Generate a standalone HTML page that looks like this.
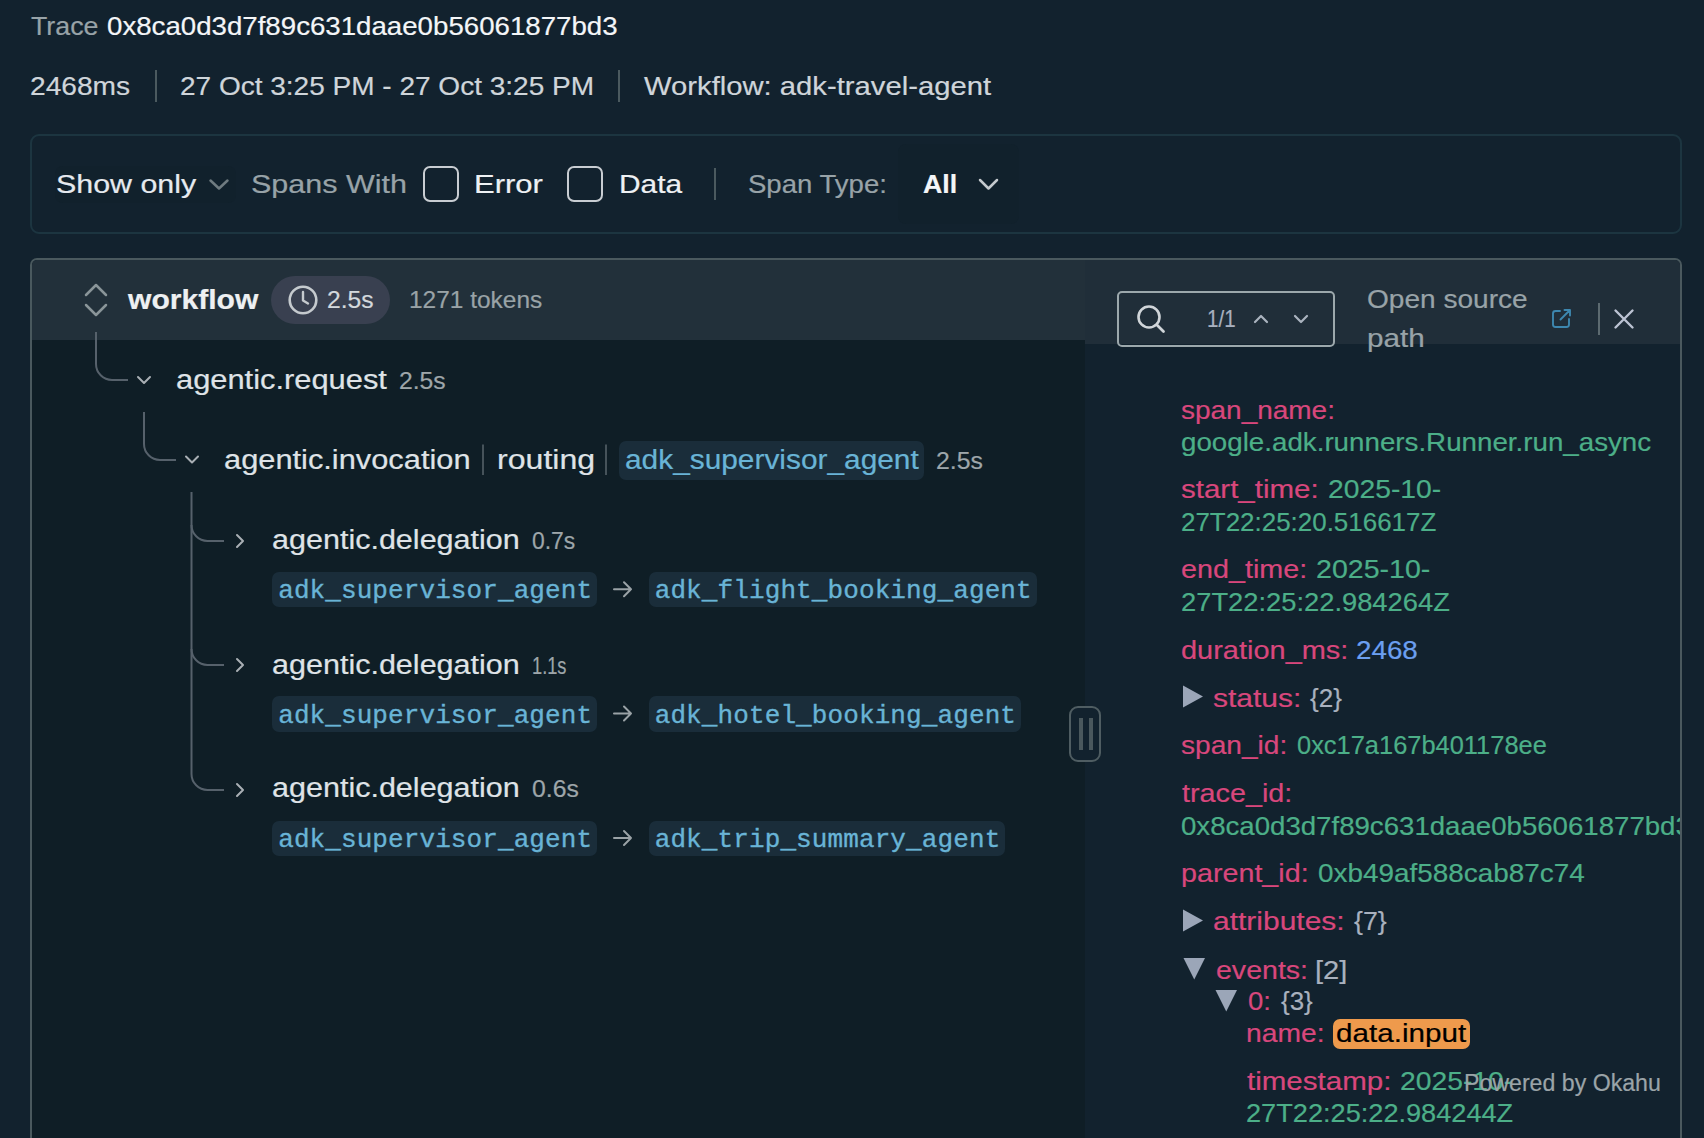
<!DOCTYPE html>
<html><head><meta charset='utf-8'><style>
html,body{margin:0;padding:0;width:1704px;height:1138px;overflow:hidden;background:#12222e;}
body{position:relative;font-family:"Liberation Sans", sans-serif;}
.t{position:absolute;white-space:pre;line-height:normal;transform-origin:0 0;}
svg{position:absolute;left:0;top:0;}
</style></head><body>
<div style='position:absolute;left:30px;top:258px;width:1652px;height:942px;border:2px solid #4a595e;border-bottom:none;border-radius:7px 7px 0 0;box-sizing:border-box;background:#12222e'></div><div style='position:absolute;left:32px;top:260px;width:1053px;height:80px;background:#22303a;border-top-left-radius:5px'></div><div style='position:absolute;left:32px;top:340px;width:1053px;height:798px;background:#0f1e26'></div><div style='position:absolute;left:1085px;top:260px;width:595px;height:84px;background:#202e39;border-top-right-radius:5px'></div><div style='position:absolute;left:155px;top:70px;width:2px;height:32px;background:#4b5a5f'></div><div style='position:absolute;left:618px;top:70px;width:2px;height:32px;background:#4b5a5f'></div><div style='position:absolute;left:30px;top:134px;width:1652px;height:100px;border:2px solid #1c3540;border-radius:9px;box-sizing:border-box'></div><div style='position:absolute;left:898px;top:144px;width:121px;height:80px;background:#11212c;border-radius:8px'></div><div style='position:absolute;left:55px;top:166px;width:181px;height:37px;background:#11212c;border-radius:8px'></div><div style='position:absolute;left:423px;top:166px;width:36px;height:36px;border:2px solid #c8cdd2;border-radius:7px;box-sizing:border-box'></div><div style='position:absolute;left:567px;top:166px;width:36px;height:36px;border:2px solid #c8cdd2;border-radius:7px;box-sizing:border-box'></div><div style='position:absolute;left:714px;top:168px;width:2px;height:32px;background:#4b5a5f'></div><div style='position:absolute;left:619px;top:440.6px;width:305px;height:39.19999999999999px;background:#1a2d3a;border-radius:7px'></div><div style='position:absolute;left:272px;top:572px;width:325px;height:35.299999999999955px;background:#1a2d3a;border-radius:7px'></div><div style='position:absolute;left:649px;top:572px;width:388px;height:35.299999999999955px;background:#1a2d3a;border-radius:7px'></div><div style='position:absolute;left:272px;top:696.3px;width:325px;height:36.0px;background:#1a2d3a;border-radius:7px'></div><div style='position:absolute;left:649px;top:696.3px;width:372px;height:36.0px;background:#1a2d3a;border-radius:7px'></div><div style='position:absolute;left:272px;top:821.3px;width:325px;height:35.0px;background:#1a2d3a;border-radius:7px'></div><div style='position:absolute;left:649px;top:821.3px;width:356px;height:35.0px;background:#1a2d3a;border-radius:7px'></div><div style='position:absolute;left:1117px;top:291px;width:218px;height:56px;border:2px solid #9ca8ac;border-radius:5px;box-sizing:border-box'></div><div style='position:absolute;left:271px;top:276px;width:119px;height:48px;background:#394050;border-radius:24px'></div><div style='position:absolute;left:1069px;top:706px;width:32px;height:56px;border:2px solid #4f5d62;border-radius:9px;box-sizing:border-box;background:#12222e'></div><div style='position:absolute;left:1079px;top:718px;width:4px;height:32px;background:#4a585d'></div><div style='position:absolute;left:1089px;top:718px;width:4px;height:32px;background:#4a585d'></div><div style='position:absolute;left:1333px;top:1019px;width:137px;height:30px;background:#ee9a4c;border-radius:7px'></div>
<svg width='1704' height='1138' viewBox='0 0 1704 1138'><path d='M210.5,180.5 L219,188.5 L227.5,180.5' stroke='#6f7b80' stroke-width='2.5' fill='none' stroke-linecap='round' stroke-linejoin='round'/><path d='M980,180 L988.5,188.5 L997,180' stroke='#c5cace' stroke-width='2.5' fill='none' stroke-linecap='round' stroke-linejoin='round'/><path d='M86,295 L96,285 L106,295' stroke='#8a9599' stroke-width='2.5' fill='none' stroke-linecap='round' stroke-linejoin='round'/><path d='M86,305 L96,315 L106,305' stroke='#8a9599' stroke-width='2.5' fill='none' stroke-linecap='round' stroke-linejoin='round'/><circle cx='303' cy='300' r='13.3' stroke='#c5cace' stroke-width='2.6' fill='none'/><path d='M303,292 V300.5 L308,303.5' stroke='#c5cace' stroke-width='2.4' fill='none' stroke-linecap='round' stroke-linejoin='round'/><circle cx='1149' cy='317' r='10.5' stroke='#d0d5d9' stroke-width='2.6' fill='none'/><path d='M1157,325 L1163.5,331.5' stroke='#d0d5d9' stroke-width='2.8' fill='none' stroke-linecap='round' stroke-linejoin='round'/><path d='M1255,322 L1261,316 L1267,322' stroke='#aab3bf' stroke-width='2.2' fill='none' stroke-linecap='round' stroke-linejoin='round'/><path d='M1295,316 L1301,322 L1307,316' stroke='#aab3bf' stroke-width='2.2' fill='none' stroke-linecap='round' stroke-linejoin='round'/><path d='M1560,311 H1555.5 Q1553,311 1553,313.5 V324.5 Q1553,327 1555.5,327 H1566.5 Q1569,327 1569,324.5 V319' stroke='#3d87af' stroke-width='1.9' fill='none' stroke-linecap='round' stroke-linejoin='round'/><path d='M1560.5,319.5 L1570,310 M1564.5,310 H1570 V315.5' stroke='#3d87af' stroke-width='1.9' fill='none' stroke-linecap='round' stroke-linejoin='round'/><rect x='1598' y='303' width='2' height='32' fill='#5c6a70'/><path d='M1615.5,310.5 L1632.5,327.5 M1632.5,310.5 L1615.5,327.5' stroke='#bcc3d3' stroke-width='2.4' fill='none' stroke-linecap='round' stroke-linejoin='round'/><path d='M96,332 V364 A16,16 0 0 0 112,380 H128' stroke='#56616b' stroke-width='2' fill='none' stroke-linecap='butt' stroke-linejoin='round'/><path d='M144,412 V444 A16,16 0 0 0 160,460 H176' stroke='#56616b' stroke-width='2' fill='none' stroke-linecap='butt' stroke-linejoin='round'/><path d='M191.5,492 V774 A16,16 0 0 0 207.5,790 H224' stroke='#56616b' stroke-width='2' fill='none' stroke-linecap='butt' stroke-linejoin='round'/><path d='M191.5,525 A16,16 0 0 0 207.5,541 H224' stroke='#56616b' stroke-width='2' fill='none' stroke-linecap='butt' stroke-linejoin='round'/><path d='M191.5,649 A16,16 0 0 0 207.5,665 H224' stroke='#56616b' stroke-width='2' fill='none' stroke-linecap='butt' stroke-linejoin='round'/><path d='M138,377 L144,383 L150,377' stroke='#a9afb4' stroke-width='2' fill='none' stroke-linecap='round' stroke-linejoin='round'/><path d='M186,456.5 L192,462.5 L198,456.5' stroke='#a9afb4' stroke-width='2' fill='none' stroke-linecap='round' stroke-linejoin='round'/><path d='M237,535 L243,541 L237,547' stroke='#a9afb4' stroke-width='2' fill='none' stroke-linecap='round' stroke-linejoin='round'/><path d='M237,659 L243,665 L237,671' stroke='#a9afb4' stroke-width='2' fill='none' stroke-linecap='round' stroke-linejoin='round'/><path d='M237,784 L243,790 L237,796' stroke='#a9afb4' stroke-width='2' fill='none' stroke-linecap='round' stroke-linejoin='round'/><rect x='482' y='444.5' width='2' height='30.5' fill='#46535a'/><rect x='605' y='444.5' width='2' height='30.5' fill='#46535a'/><path d='M614,589.3 H631 M624,582.3 L631,589.3 L624,596.3' stroke='#9aa2a6' stroke-width='2' fill='none' stroke-linecap='round' stroke-linejoin='round'/><path d='M614,713.5 H631 M624,706.5 L631,713.5 L624,720.5' stroke='#9aa2a6' stroke-width='2' fill='none' stroke-linecap='round' stroke-linejoin='round'/><path d='M614,838 H631 M624,831 L631,838 L624,845' stroke='#9aa2a6' stroke-width='2' fill='none' stroke-linecap='round' stroke-linejoin='round'/><path d='M1183,685.5 L1203,696.5 L1183,707.5 Z' fill='#9ba6b8'/><path d='M1183,909.5 L1203,920.5 L1183,931.5 Z' fill='#9ba6b8'/><path d='M1183.5,958 L1205,958 L1194.25,979.5 Z' fill='#9ba6b8'/><path d='M1215.5,990 L1237,990 L1226.25,1011.5 Z' fill='#9ba6b8'/></svg>
<div style='position:absolute;left:1085px;top:344px;width:595px;height:794px;overflow:hidden'><div style='position:absolute;left:-1085px;top:-344px;width:1704px;height:1138px'>
<div class='t' style='left:1181.22px;top:394.60px;transform:scaleX(1.0757);-webkit-text-stroke:0.2px currentColor;font-family:"Liberation Sans", sans-serif;font-size:26px;font-weight:400'><span style='color:#d8477c'>span_name:</span></div><div class='t' style='left:1180.73px;top:426.60px;transform:scaleX(1.0665);-webkit-text-stroke:0.2px currentColor;font-family:"Liberation Sans", sans-serif;font-size:26px;font-weight:400'><span style='color:#4caf88'>google.adk.runners.Runner.run_async</span></div><div class='t' style='left:1181.17px;top:474.30px;transform:scaleX(1.1345);-webkit-text-stroke:0.2px currentColor;font-family:"Liberation Sans", sans-serif;font-size:26px;font-weight:400'><span style='color:#d8477c'>start_time:</span></div><div class='t' style='left:1328.21px;top:474.30px;transform:scaleX(1.0873);-webkit-text-stroke:0.2px currentColor;font-family:"Liberation Sans", sans-serif;font-size:26px;font-weight:400'><span style='color:#4caf88'>2025-10-</span></div><div class='t' style='left:1181.30px;top:506.80px;transform:scaleX(0.9976);-webkit-text-stroke:0.2px currentColor;font-family:"Liberation Sans", sans-serif;font-size:26px;font-weight:400'><span style='color:#4caf88'>27T22:25:20.516617Z</span></div><div class='t' style='left:1181.19px;top:554.30px;transform:scaleX(1.1054);-webkit-text-stroke:0.2px currentColor;font-family:"Liberation Sans", sans-serif;font-size:26px;font-weight:400'><span style='color:#d8477c'>end_time:</span></div><div class='t' style='left:1315.90px;top:554.30px;transform:scaleX(1.0980);-webkit-text-stroke:0.2px currentColor;font-family:"Liberation Sans", sans-serif;font-size:26px;font-weight:400'><span style='color:#4caf88'>2025-10-</span></div><div class='t' style='left:1181.25px;top:586.80px;transform:scaleX(1.0506);-webkit-text-stroke:0.2px currentColor;font-family:"Liberation Sans", sans-serif;font-size:26px;font-weight:400'><span style='color:#4caf88'>27T22:25:22.984264Z</span></div><div class='t' style='left:1181.19px;top:634.50px;transform:scaleX(1.1136);-webkit-text-stroke:0.2px currentColor;font-family:"Liberation Sans", sans-serif;font-size:26px;font-weight:400'><span style='color:#d8477c'>duration_ms:</span></div><div class='t' style='left:1356.43px;top:634.50px;transform:scaleX(1.0679);-webkit-text-stroke:0.2px currentColor;font-family:"Liberation Sans", sans-serif;font-size:26px;font-weight:400'><span style='color:#6b9ff0'>2468</span></div><div class='t' style='left:1212.85px;top:682.60px;transform:scaleX(1.1541);-webkit-text-stroke:0.2px currentColor;font-family:"Liberation Sans", sans-serif;font-size:26px;font-weight:400'><span style='color:#d8477c'>status:</span></div><div class='t' style='left:1310.00px;top:682.60px;transform:scaleX(1.0000);-webkit-text-stroke:0.2px currentColor;font-family:"Liberation Sans", sans-serif;font-size:26px;font-weight:400'><span style='color:#a9b1be'>{2}</span></div><div class='t' style='left:1181.22px;top:730.40px;transform:scaleX(1.0811);-webkit-text-stroke:0.2px currentColor;font-family:"Liberation Sans", sans-serif;font-size:26px;font-weight:400'><span style='color:#d8477c'>span_id:</span></div><div class='t' style='left:1296.62px;top:730.40px;transform:scaleX(0.9780);-webkit-text-stroke:0.2px currentColor;font-family:"Liberation Sans", sans-serif;font-size:26px;font-weight:400'><span style='color:#4caf88'>0xc17a167b401178ee</span></div><div class='t' style='left:1182.30px;top:778.30px;transform:scaleX(1.1061);-webkit-text-stroke:0.2px currentColor;font-family:"Liberation Sans", sans-serif;font-size:26px;font-weight:400'><span style='color:#d8477c'>trace_id:</span></div><div class='t' style='left:1181.24px;top:810.50px;transform:scaleX(1.0621);-webkit-text-stroke:0.2px currentColor;font-family:"Liberation Sans", sans-serif;font-size:26px;font-weight:400'><span style='color:#4caf88'>0x8ca0d3d7f89c631daae0b56061877bd3</span></div><div class='t' style='left:1181.20px;top:858.30px;transform:scaleX(1.1035);-webkit-text-stroke:0.2px currentColor;font-family:"Liberation Sans", sans-serif;font-size:26px;font-weight:400'><span style='color:#d8477c'>parent_id:</span></div><div class='t' style='left:1317.93px;top:858.30px;transform:scaleX(1.0725);-webkit-text-stroke:0.2px currentColor;font-family:"Liberation Sans", sans-serif;font-size:26px;font-weight:400'><span style='color:#4caf88'>0xb49af588cab87c74</span></div><div class='t' style='left:1212.85px;top:906.30px;transform:scaleX(1.1532);-webkit-text-stroke:0.2px currentColor;font-family:"Liberation Sans", sans-serif;font-size:26px;font-weight:400'><span style='color:#d8477c'>attributes:</span></div><div class='t' style='left:1353.50px;top:906.30px;transform:scaleX(1.0281);-webkit-text-stroke:0.2px currentColor;font-family:"Liberation Sans", sans-serif;font-size:26px;font-weight:400'><span style='color:#a9b1be'>{7}</span></div><div class='t' style='left:1215.50px;top:954.50px;transform:scaleX(1.0975);-webkit-text-stroke:0.2px currentColor;font-family:"Liberation Sans", sans-serif;font-size:26px;font-weight:400'><span style='color:#d8477c'>events:</span></div><div class='t' style='left:1315.16px;top:954.50px;transform:scaleX(1.1192);-webkit-text-stroke:0.2px currentColor;font-family:"Liberation Sans", sans-serif;font-size:26px;font-weight:400'><span style='color:#a9b1be'>[2]</span></div><div class='t' style='left:1247.84px;top:986.40px;transform:scaleX(1.0579);-webkit-text-stroke:0.2px currentColor;font-family:"Liberation Sans", sans-serif;font-size:26px;font-weight:400'><span style='color:#d8477c'>0:</span></div><div class='t' style='left:1280.80px;top:986.40px;transform:scaleX(0.9969);-webkit-text-stroke:0.2px currentColor;font-family:"Liberation Sans", sans-serif;font-size:26px;font-weight:400'><span style='color:#a9b1be'>{3}</span></div><div class='t' style='left:1245.91px;top:1018.30px;transform:scaleX(1.0870);-webkit-text-stroke:0.2px currentColor;font-family:"Liberation Sans", sans-serif;font-size:26px;font-weight:400'><span style='color:#d8477c'>name:</span></div><div class='t' style='left:1335.86px;top:1018.30px;transform:scaleX(1.1398);-webkit-text-stroke:0.2px currentColor;font-family:"Liberation Sans", sans-serif;font-size:26px;font-weight:400'><span style='color:#000000'>data.input</span></div><div class='t' style='left:1247.00px;top:1066.20px;transform:scaleX(1.1360);-webkit-text-stroke:0.2px currentColor;font-family:"Liberation Sans", sans-serif;font-size:26px;font-weight:400'><span style='color:#d8477c'>timestamp:</span></div><div class='t' style='left:1399.91px;top:1066.20px;transform:scaleX(1.0882);-webkit-text-stroke:0.2px currentColor;font-family:"Liberation Sans", sans-serif;font-size:26px;font-weight:400'><span style='color:#4caf88'>2025-10-</span></div><div class='t' style='left:1245.96px;top:1098.20px;transform:scaleX(1.0443);-webkit-text-stroke:0.2px currentColor;font-family:"Liberation Sans", sans-serif;font-size:26px;font-weight:400'><span style='color:#4caf88'>27T22:25:22.984244Z</span></div>
</div></div>
<div class='t' style='left:30.50px;top:11.00px;transform:scaleX(1.0292);-webkit-text-stroke:0.2px currentColor;font-family:"Liberation Sans", sans-serif;font-size:26px;font-weight:400'><span style='color:#98a3a8'>Trace</span></div><div class='t' style='left:106.54px;top:11.00px;transform:scaleX(1.0636);-webkit-text-stroke:0.2px currentColor;font-family:"Liberation Sans", sans-serif;font-size:26px;font-weight:400'><span style='color:#f4f6f8'>0x8ca0d3d7f89c631daae0b56061877bd3</span></div><div class='t' style='left:29.92px;top:71.20px;transform:scaleX(1.0824);-webkit-text-stroke:0.2px currentColor;font-family:"Liberation Sans", sans-serif;font-size:26px;font-weight:400'><span style='color:#cfd5da'>2468ms</span></div><div class='t' style='left:179.92px;top:71.20px;transform:scaleX(1.0770);-webkit-text-stroke:0.2px currentColor;font-family:"Liberation Sans", sans-serif;font-size:26px;font-weight:400'><span style='color:#cfd5da'>27 Oct 3:25 PM - 27 Oct 3:25 PM</span></div><div class='t' style='left:644.00px;top:71.20px;transform:scaleX(1.1239);-webkit-text-stroke:0.2px currentColor;font-family:"Liberation Sans", sans-serif;font-size:26px;font-weight:400'><span style='color:#cfd5da'>Workflow: adk-travel-agent</span></div><div class='t' style='left:55.53px;top:169.00px;transform:scaleX(1.1689);-webkit-text-stroke:0.2px currentColor;font-family:"Liberation Sans", sans-serif;font-size:26px;font-weight:400'><span style='color:#e6eaef'>Show only</span></div><div class='t' style='left:250.63px;top:169.00px;transform:scaleX(1.1740);-webkit-text-stroke:0.2px currentColor;font-family:"Liberation Sans", sans-serif;font-size:26px;font-weight:400'><span style='color:#98a3a8'>Spans With</span></div><div class='t' style='left:473.61px;top:169.00px;transform:scaleX(1.1929);-webkit-text-stroke:0.2px currentColor;font-family:"Liberation Sans", sans-serif;font-size:26px;font-weight:400'><span style='color:#eef1f4'>Error</span></div><div class='t' style='left:618.50px;top:169.00px;transform:scaleX(1.1491);-webkit-text-stroke:0.2px currentColor;font-family:"Liberation Sans", sans-serif;font-size:26px;font-weight:400'><span style='color:#eef1f4'>Data</span></div><div class='t' style='left:747.94px;top:169.00px;transform:scaleX(1.0594);-webkit-text-stroke:0.2px currentColor;font-family:"Liberation Sans", sans-serif;font-size:26px;font-weight:400'><span style='color:#98a3a8'>Span Type:</span></div><div class='t' style='left:922.60px;top:169.00px;transform:scaleX(1.0281);-webkit-text-stroke:0.2px currentColor;font-family:"Liberation Sans", sans-serif;font-size:26px;font-weight:700'><span style='color:#f4f6f8'>All</span></div><div class='t' style='left:128.00px;top:285.00px;transform:scaleX(1.1145);-webkit-text-stroke:0.2px currentColor;font-family:"Liberation Sans", sans-serif;font-size:27px;font-weight:700'><span style='color:#eef0f2'>workflow</span></div><div class='t' style='left:326.93px;top:287.00px;transform:scaleX(1.0714);-webkit-text-stroke:0.2px currentColor;font-family:"Liberation Sans", sans-serif;font-size:23px;font-weight:400'><span style='color:#d3d8dc'>2.5s</span></div><div class='t' style='left:408.88px;top:286.00px;transform:scaleX(1.0186);-webkit-text-stroke:0.2px currentColor;font-family:"Liberation Sans", sans-serif;font-size:24px;font-weight:400'><span style='color:#9aa3a7'>1271 tokens</span></div><div class='t' style='left:1206.84px;top:305.00px;transform:scaleX(0.8562);-webkit-text-stroke:0.2px currentColor;font-family:"Liberation Sans", sans-serif;font-size:24px;font-weight:400'><span style='color:#a8b1c0'>1/1</span></div><div class='t' style='left:1366.92px;top:284.00px;transform:scaleX(1.0789);-webkit-text-stroke:0.2px currentColor;font-family:"Liberation Sans", sans-serif;font-size:26px;font-weight:400'><span style='color:#98a3a8'>Open source</span></div><div class='t' style='left:1366.86px;top:322.80px;transform:scaleX(1.1417);-webkit-text-stroke:0.2px currentColor;font-family:"Liberation Sans", sans-serif;font-size:26px;font-weight:400'><span style='color:#98a3a8'>path</span></div><div class='t' style='left:175.66px;top:364.60px;transform:scaleX(1.1424);-webkit-text-stroke:0.2px currentColor;font-family:"Liberation Sans", sans-serif;font-size:27px;font-weight:400'><span style='color:#dfe3e7'>agentic.request</span></div><div class='t' style='left:398.63px;top:367.60px;transform:scaleX(1.0738);-webkit-text-stroke:0.2px currentColor;font-family:"Liberation Sans", sans-serif;font-size:23px;font-weight:400'><span style='color:#9ea6aa'>2.5s</span></div><div class='t' style='left:223.76px;top:444.70px;transform:scaleX(1.1407);-webkit-text-stroke:0.2px currentColor;font-family:"Liberation Sans", sans-serif;font-size:27px;font-weight:400'><span style='color:#dfe3e7'>agentic.invocation</span></div><div class='t' style='left:496.71px;top:444.70px;transform:scaleX(1.1888);-webkit-text-stroke:0.2px currentColor;font-family:"Liberation Sans", sans-serif;font-size:27px;font-weight:400'><span style='color:#dfe3e7'>routing</span></div><div class='t' style='left:624.69px;top:444.70px;transform:scaleX(1.1057);-webkit-text-stroke:0.2px currentColor;font-family:"Liberation Sans", sans-serif;font-size:27px;font-weight:400'><span style='color:#69b4d6'>adk_supervisor_agent</span></div><div class='t' style='left:936.22px;top:447.70px;transform:scaleX(1.0786);-webkit-text-stroke:0.2px currentColor;font-family:"Liberation Sans", sans-serif;font-size:23px;font-weight:400'><span style='color:#9ea6aa'>2.5s</span></div><div class='t' style='left:271.77px;top:524.60px;transform:scaleX(1.1304);-webkit-text-stroke:0.2px currentColor;font-family:"Liberation Sans", sans-serif;font-size:27px;font-weight:400'><span style='color:#dfe3e7'>agentic.delegation</span></div><div class='t' style='left:531.80px;top:527.60px;transform:scaleX(0.9952);-webkit-text-stroke:0.2px currentColor;font-family:"Liberation Sans", sans-serif;font-size:23px;font-weight:400'><span style='color:#9ea6aa'>0.7s</span></div><div class='t' style='left:271.77px;top:650.00px;transform:scaleX(1.1304);-webkit-text-stroke:0.2px currentColor;font-family:"Liberation Sans", sans-serif;font-size:27px;font-weight:400'><span style='color:#dfe3e7'>agentic.delegation</span></div><div class='t' style='left:531.51px;top:653.00px;transform:scaleX(0.7929);-webkit-text-stroke:0.2px currentColor;font-family:"Liberation Sans", sans-serif;font-size:23px;font-weight:400'><span style='color:#9ea6aa'>1.1s</span></div><div class='t' style='left:271.77px;top:772.80px;transform:scaleX(1.1304);-webkit-text-stroke:0.2px currentColor;font-family:"Liberation Sans", sans-serif;font-size:27px;font-weight:400'><span style='color:#dfe3e7'>agentic.delegation</span></div><div class='t' style='left:531.72px;top:775.80px;transform:scaleX(1.0762);-webkit-text-stroke:0.2px currentColor;font-family:"Liberation Sans", sans-serif;font-size:23px;font-weight:400'><span style='color:#9ea6aa'>0.6s</span></div><div class='t' style='left:278.2px;top:576.3px;letter-spacing:0.095px;-webkit-text-stroke:0.35px currentColor;font-family:"Liberation Mono", monospace;font-size:26px;font-weight:400'><span style='color:#69b4d6'>adk_supervisor_agent</span></div><div class='t' style='left:654.7px;top:576.3px;letter-spacing:0.109px;-webkit-text-stroke:0.35px currentColor;font-family:"Liberation Mono", monospace;font-size:26px;font-weight:400'><span style='color:#69b4d6'>adk_flight_booking_agent</span></div><div class='t' style='left:278.2px;top:700.6px;letter-spacing:0.095px;-webkit-text-stroke:0.35px currentColor;font-family:"Liberation Mono", monospace;font-size:26px;font-weight:400'><span style='color:#69b4d6'>adk_supervisor_agent</span></div><div class='t' style='left:654.7px;top:700.6px;letter-spacing:0.109px;-webkit-text-stroke:0.35px currentColor;font-family:"Liberation Mono", monospace;font-size:26px;font-weight:400'><span style='color:#69b4d6'>adk_hotel_booking_agent</span></div><div class='t' style='left:278.2px;top:825px;letter-spacing:0.095px;-webkit-text-stroke:0.35px currentColor;font-family:"Liberation Mono", monospace;font-size:26px;font-weight:400'><span style='color:#69b4d6'>adk_supervisor_agent</span></div><div class='t' style='left:654.7px;top:825px;letter-spacing:0.109px;-webkit-text-stroke:0.35px currentColor;font-family:"Liberation Mono", monospace;font-size:26px;font-weight:400'><span style='color:#69b4d6'>adk_trip_summary_agent</span></div><div class='t' style='left:1463.59px;top:1069.50px;transform:scaleX(1.0063);-webkit-text-stroke:0.2px currentColor;font-family:"Liberation Sans", sans-serif;font-size:23px;font-weight:400'><span style='color:#9ba4a8'>Powered by Okahu</span></div>
</body></html>
